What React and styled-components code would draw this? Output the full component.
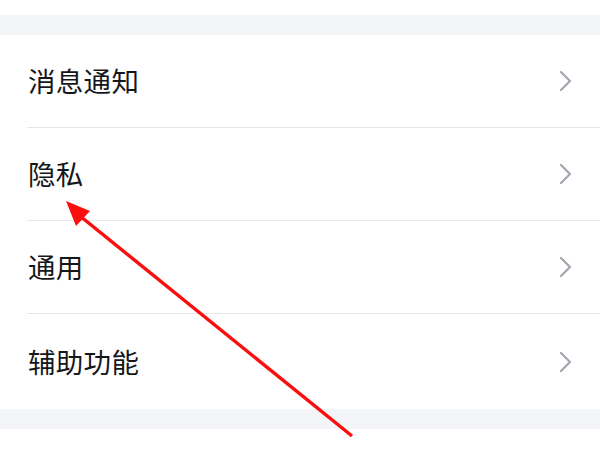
import React from "react";
import styled, { createGlobalStyle } from "styled-components";

const Global = createGlobalStyle`
  html, body { margin: 0; padding: 0; background: #fff; }
  body { font-family: "Noto Sans CJK SC", "Noto Sans", sans-serif; }
`;

const Page = styled.div`
  position: relative;
  width: 600px;
  height: 450px;
  overflow: hidden;
  background: #fff;
  padding-top: 15px;
  box-sizing: border-box;
`;

const Band = styled.div`
  height: 20px;
  background: #f4f5f8;
`;

const List = styled.div`
  display: flex;
  flex-direction: column;
  background: #fff;
`;

const Row = styled.div`
  display: flex;
  align-items: center;
  justify-content: space-between;
  height: ${(p) => (p.$last ? 95 : 92)}px;
  margin-left: 27px;
  padding-right: 27px;
  border-bottom: ${(p) => (p.$last ? "none" : "1px solid #e6e7eb")};
`;

const Label = styled.span`
  font-size: 27.5px;
  color: #16171a;
  letter-spacing: 0.3px;
  padding-left: 1px;
  line-height: 1;
`;

const Chevron = () => (
  <svg width="14" height="22" viewBox="0 0 14 22">
    <path d="M2 2 L11 11 L2 20" fill="none" stroke="#a3a6af" strokeWidth="2.2" strokeLinecap="round" strokeLinejoin="round" />
  </svg>
);

const ArrowOverlay = styled.svg`
  position: absolute;
  left: 0;
  top: 0;
  pointer-events: none;
`;

const items = ["消息通知", "隐私", "通用", "辅助功能"];

export default function App() {
  return (
    <>
      <Global />
      <Page>
        <Band />
        <List>
          {items.map((t, i) => (
            <Row key={t} $last={i === items.length - 1}>
              <Label>{t}</Label>
              <Chevron />
            </Row>
          ))}
        </List>
        <Band />
        <ArrowOverlay width="600" height="450" viewBox="0 0 600 450">
          <line x1="352" y1="436" x2="80" y2="216" stroke="#fa0f0f" strokeWidth="3.4" />
          <polygon points="66,201 90,211 76,226" fill="#fa0f0f" />
        </ArrowOverlay>
      </Page>
    </>
  );
}
